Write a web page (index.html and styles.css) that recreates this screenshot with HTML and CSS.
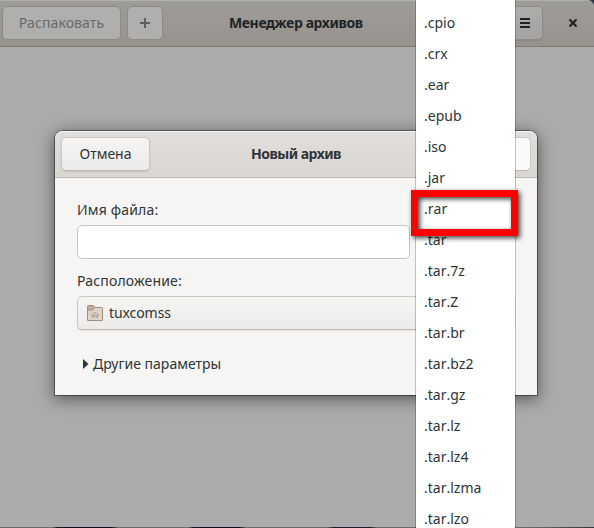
FILE: index.html
```html
<!DOCTYPE html>
<html lang="ru">
<head>
<meta charset="utf-8">
<title>Менеджер архивов</title>
<link rel="stylesheet" href="styles.css">
</head>
<body>
<div class="window">
  <header class="titlebar">
    <button class="btn extract">Распаковать</button>
    <button class="btn add"><svg width="10" height="10" viewBox="0 0 10 10"><path d="M4 0h2v4h4v2H6v4H4V6H0V4h4z" fill="#5e6060"/></svg></button>
    <h1 class="title">Менеджер архивов</h1>
    <button class="btn menu"><svg width="10" height="10" viewBox="0 0 10 10"><path d="M0 0h10v2H0zM0 4h10v2H0zM0 8h10v2H0z" fill="#202426"/></svg></button>
    <span class="close"><svg width="8" height="8" viewBox="0 0 8 8"><path d="M.5.5l7 7M7.500.5l-7 7" stroke="#202426" stroke-width="2.200"/></svg></span>
  </header>
</div>
<section class="dialog">
  <header class="dialog-head">
    <button class="btn cancel">Отмена</button>
    <h2 class="dialog-title">Новый архив</h2>
    <button class="btn create"></button>
  </header>
  <div class="form">
    <label class="label name-label">Имя файла:</label>
    <div class="entry"></div>
    <label class="label place-label">Расположение:</label>
    <div class="chooser">
      <svg class="folder" width="16" height="16" viewBox="0 0 16 16"><path d="M.5 15.500V1.500q0-1 1-1H6.500L8.500 2.500H14.500q1 0 1 1V15.500z" fill="#dfd3c8" stroke="#a18d7c"/><path d="M1 1h5.500l1.500 1.500L6 5H1z" fill="#c4ab99"/><path d="M.5 5H5.500L8 2.500" fill="none" stroke="#a18d7c"/><path d="M4 10.500L8 7l4 3.500M5.500 9.500v3h1.500v-2.500h2v2.500h1.500v-3" fill="none" stroke="#b39f8e"/></svg>
      <span class="place">tuxcomss</span>
    </div>
    <div class="expander"><svg width="6" height="10" viewBox="0 0 6 10"><path d="M0 0l5.500 5L0 10z" fill="#2e3436"/></svg><span class="more">Другие параметры</span></div>
  </div>
</section>
<ul class="popup">
  <li>.cpio</li><li>.crx</li><li>.ear</li><li>.epub</li><li>.iso</li><li>.jar</li><li>.rar</li><li>.tar</li><li>.tar.7z</li><li>.tar.Z</li><li>.tar.br</li><li>.tar.bz2</li><li>.tar.gz</li><li>.tar.lz</li><li>.tar.lz4</li><li>.tar.lzma</li><li>.tar.lzo</li>
</ul>
<div class="marker"></div>
</body>
</html>
```
FILE: styles.css
```css
* { box-sizing: border-box; }
body {
  margin: 0;
  width: 594px;
  height: 528px;
  position: relative;
  overflow: hidden;
  background: linear-gradient(90deg, #6f6a63 52px, #08131f 58px 112px, #6f6a63 118px 188px, #08131f 194px 240px, #6f6a63 246px 327px, #14202c 333px 371px, #6f6a63 377px 530px, #2c3444);
  font: 14px/20px "Noto Sans", "Open Sans", sans-serif;
  color: #2e3436;
}
.window {
  height: 527px;
  background: #ababab;
  border-radius: 0 7px 0 0;
  overflow: hidden;
}
.titlebar {
  display: flex;
  align-items: flex-start;
  height: 47px;
  padding: 5px 0 0 2px;
  background: linear-gradient(#9e9c98, #98928d);
  border-top: 1px solid #b0afac;
  border-bottom: 1px solid #817973;
}
.btn {
  flex: none;
  height: 34px;
  padding: 0;
  border: 1px solid #cdc7c2;
  border-bottom-color: #bfb8b1;
  border-radius: 5px;
  background: linear-gradient(#f6f5f4, #edebe9);
  font: inherit;
  color: inherit;
}
.titlebar .btn {
  background: #afafae;
  border-color: #908983;
}
.titlebar .extract { width: 119px; color: #686b6b; letter-spacing: .1px; }
.titlebar .add { width: 36px; margin-left: 6px; display: grid; place-items: center; }
.title, .dialog-title { margin: 0; font-size: 14px; line-height: 20px; font-weight: 700; white-space: nowrap; }
.title { width: 134px; margin: 7px 0 0 66px; color: #202426; letter-spacing: -.38px; }
.titlebar .menu {
  width: 37px;
  margin-left: 143px;
  padding-left: 1px;
  display: grid;
  place-items: center;
  background: linear-gradient(#adadac, #a4a3a1);
  box-shadow: 0 1px 1px #8b8682;
}
.close { display: flex; margin: 13px 0 0 26px; }
.dialog {
  position: absolute;
  left: 55px;
  top: 131px;
  width: 482px;
  height: 264px;
  background: #f6f5f3;
  border-radius: 8px 8px 0 0;
  box-shadow: 0 0 0 1px rgba(0,0,0,.4), 0 3px 16px 1px rgba(0,0,0,.5);
}
.dialog-head {
  display: flex;
  height: 47px;
  padding: 5px 6px 0;
  border-top: 1px solid #f8f7f5;
  border-bottom: 1px solid #bfb8b1;
  border-radius: 8px 8px 0 0;
  background: linear-gradient(#e1dedb, #dad6d2);
}
.cancel { width: 89px; box-shadow: 0 1px 2px rgba(0,0,0,.1); }
.dialog-title { width: 90px; margin: 7px 0 0 101px; letter-spacing: -.52px; }
.create { width: 89px; margin-left: auto; background: #fafafa; }
.form { padding: 22px 22px 0; }
.label { display: block; white-space: nowrap; letter-spacing: .17px; }
.entry {
  width: 333px;
  height: 34px;
  margin: 5px 0 12px;
  border: 1px solid #c8c5c1;
  border-radius: 5px;
  background: #fff;
}
.chooser {
  display: flex;
  align-items: center;
  height: 34px;
  margin-top: 5px;
  padding-left: 9px;
  border: 1px solid #cdc7c2;
  border-bottom-color: #bfb8b1;
  border-radius: 5px;
  background: linear-gradient(#f6f5f4, #edebe9);
  box-shadow: 0 1px 2px rgba(0,0,0,.08);
}
.place { margin-left: 6px; letter-spacing: -.08px; }
.expander { display: flex; align-items: center; margin: 24px 0 0 6px; }
.more { margin-left: 4px; white-space: nowrap; }
.popup {
  position: absolute;
  left: 416px;
  top: 0;
  width: 99px;
  height: 528px;
  margin: 0;
  padding: 7px 8px 0;
  overflow: hidden;
  list-style: none;
  background: #fff;
  box-shadow: 0 0 0 1px rgba(0,0,0,.22);
  font-kerning: none;
}
.popup li { height: 31px; line-height: 31px; }
.marker {
  position: absolute;
  left: 411px;
  top: 190px;
  width: 107px;
  height: 46px;
  border: 7px solid #f00;
  box-shadow: 2px 2px 5px rgba(0,0,0,.75), inset 2px 2px 5px rgba(0,0,0,.75);
}
```
